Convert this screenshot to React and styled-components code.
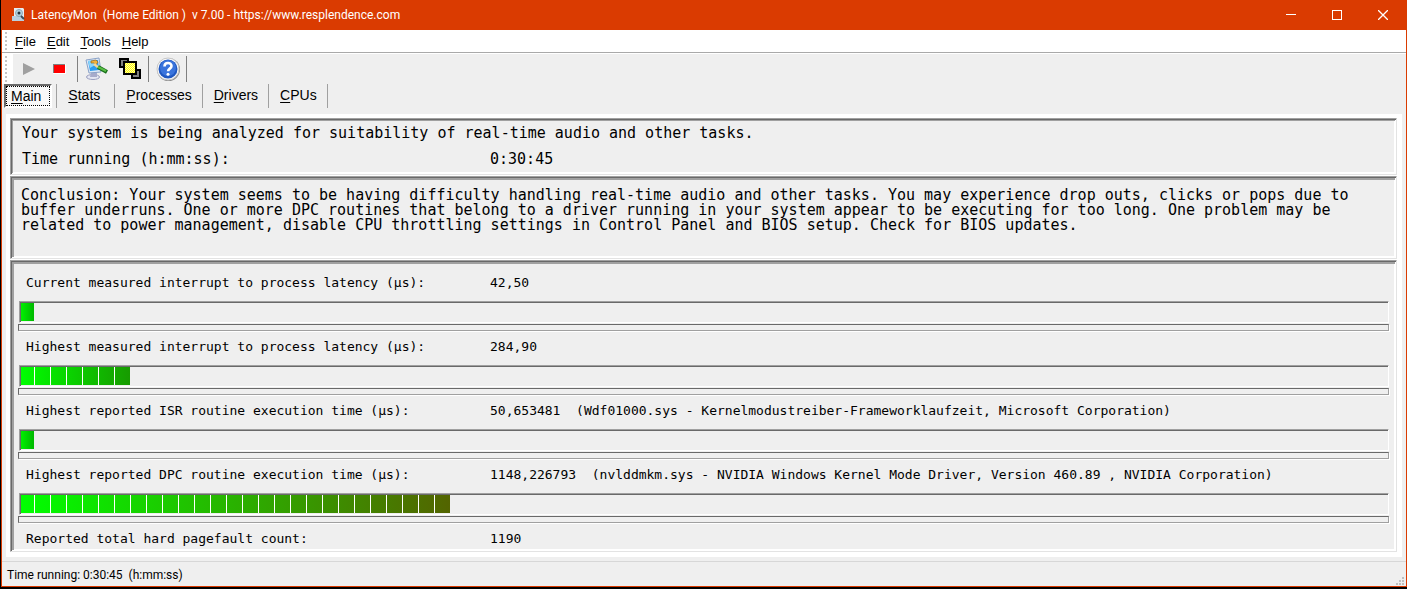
import React from "react";
import styled, { createGlobalStyle } from "styled-components";

const GlobalStyle = createGlobalStyle`
  * {
    box-sizing: border-box;
  }
  body {
    margin: 0;
    background: #000;
    color: #000;
    font-family: "Liberation Sans", Arial, sans-serif;
  }
`;

const Window = styled.div`
  display: flex;
  flex-direction: column;
  min-height: calc(100vh - 2px);
  margin-left: 1px;
  border: 1px solid #da3b01;
  border-top: 0;
  background: #efefef;
`;

const TitleBar = styled.header`
  display: flex;
  align-items: center;
  height: 30px;
  padding-left: 9px;
  background: #da3b01;
  color: #fff;
`;

const Title = styled.h1`
  flex: 1;
  margin: 0 0 0 4px;
  font: 12px/16px Roboto, "Segoe UI", sans-serif;
  white-space: pre;
`;

const CaptionButton = styled.button`
  display: flex;
  align-items: center;
  justify-content: center;
  width: 46px;
  height: 30px;
  padding: 0;
  border: 0;
  background: none;
  color: #fff;
`;

const MenuBar = styled.nav`
  display: flex;
  align-items: center;
  gap: 11px;
  height: 24px;
  padding-left: 3px;
  border-bottom: 1px solid #fff;
  background: #fff;
  box-shadow: inset 0 -1px #a9a9a9;
`;

const Grip = styled.span`
  align-self: stretch;
  width: 2px;
  margin: 2px 0;
  background: repeating-linear-gradient(#c4c4c4 0 2px, #fff 2px 4px);
`;

const MenuButton = styled.button`
  padding: 0;
  border: 0;
  background: none;
  color: #000;
  font: 13px/16px "Liberation Sans", Arial, sans-serif;

  &:first-of-type {
    margin-left: -3px;
  }
`;

const Key = styled.span`
  text-decoration: underline;
  text-underline-offset: 2px;
`;

const ToolBar = styled.div`
  display: flex;
  align-items: center;
  height: 30px;
`;

const ToolGrip = styled.div`
  display: flex;
  width: 11px;
  height: 30px;
  padding-left: 3px;
  background: #fff;
`;

const ToolButton = styled.button`
  display: flex;
  align-items: center;
  justify-content: center;
  width: ${(props) => (props.$wide ? 33 : 31)}px;
  height: 28px;
  padding: 0;
  border: 0;
  background: none;
`;

const Divider = styled.span`
  width: 1px;
  height: 26px;
  margin: 0 2px;
  background: #808080;
`;

const Tabs = styled.div`
  display: flex;
  height: 24px;
  padding-left: 2px;
`;

const Tab = styled.button`
  min-width: 58px;
  height: 24px;
  padding: 0 10px 2px 11px;
  border: 0;
  border-right: 1px solid #a0a0a0;
  background: none;
  color: #000;
  font: 14px/20px "Liberation Sans", Arial, sans-serif;
  text-align: left;
`;

const ActiveTab = styled(Tab)`
  min-width: 0;
  margin-right: 4px;
  padding: 0 9px 0 5px;
  border: 2px solid #fff;
  border-top-color: #696969;
  border-left-color: #696969;
  background: #f8f8f8;
  outline: 1px dotted #000;
  outline-offset: -3px;
`;

const TabGap = styled.span`
  width: 1px;
  background: #a0a0a0;
`;

const Page = styled.main`
  flex: 1;
  display: flex;
  flex-direction: column;
  gap: 1px;
  margin: 6px 4px 4px;
  padding: 4px 5px 5px 4px;
  background: #fff;
`;

const Panel = styled.section`
  border: 1px solid #e3e3e3;
  border-top-color: #a0a0a0;
  border-left-color: #a0a0a0;
  background: #efefef;
  box-shadow:
    inset 1px 1px #696969,
    inset -1px -1px #fff,
    inset ${(props) => (props.$deep ? "3px 3px" : "2px 2px")} #a0a0a0,
    inset -2px -2px #fff;
  font-family: "DejaVu Sans Mono", "Lucida Console", monospace;
`;

const Summary = styled(Panel)`
  height: 57px;
  padding: 1px 11px;
  font-size: 15px;
  line-height: 26px;
`;

const Pair = styled.div`
  display: grid;
  grid-template-columns: 468px 1fr;
  white-space: pre;
`;

const Conclusion = styled(Panel)`
  min-height: 83px;
  padding: 11px 10px;
  font-size: 15px;
  line-height: 15px;
`;

const Paragraph = styled.p`
  margin: 0;
`;

const Readings = styled(Panel)`
  flex: 1;
  padding: 5px 7px 0;
`;

const Reading = styled.div`
  height: 64px;

  &:last-child {
    height: 24px;
  }
`;

const ReadingText = styled.div`
  display: grid;
  grid-template-columns: 464px 1fr;
  margin-bottom: 2px;
  padding-left: 8px;
  font-size: 13px;
  line-height: 33px;
  white-space: pre;
`;

const Meter = styled.div`
  height: 22px;
  margin-left: 1px;
  border: 1px solid #fff;
  border-top-color: #a0a0a0;
  border-left-color: #a0a0a0;
  box-shadow: inset 1px 1px #696969;
  padding: 1px 0 0 1px;
`;

const Fill = styled.div`
  height: 18px;
  background:
    repeating-linear-gradient(90deg, transparent 0 13px, #fff 13px 14px, transparent 14px 16px),
    linear-gradient(90deg, ${(props) => props.$from}, ${(props) => props.$to});
`;

const Groove = styled.div`
  height: 7px;
  margin-top: 1px;
  border: 1px solid #a0a0a0;
  border-top-color: #696969;
  border-left-color: #696969;
  box-shadow: 1px 1px #fff;
`;

const StatusBar = styled.footer`
  display: flex;
  align-items: center;
  justify-content: space-between;
  height: 25px;
  padding: 1px 2px 0 5px;
  border-top: 1px solid #d7d7d7;
  font: 12px/16px Roboto, "Segoe UI", sans-serif;
  white-space: pre;
`;

const menus = ["File", "Edit", "Tools", "Help"];
const tabs = ["Stats", "Processes", "Drivers", "CPUs"];

const readings = [
  {
    label: "Current measured interrupt to process latency (µs):",
    value: "42,50",
    width: 13,
    from: "#00f000",
    to: "#00b800",
  },
  {
    label: "Highest measured interrupt to process latency (µs):",
    value: "284,90",
    width: 109,
    from: "#00ff00",
    to: "#179b00",
  },
  {
    label: "Highest reported ISR routine execution time (µs):",
    value: "50,653481  (Wdf01000.sys - Kernelmodustreiber-Frameworklaufzeit, Microsoft Corporation)",
    width: 13,
    from: "#00f000",
    to: "#00b800",
  },
  {
    label: "Highest reported DPC routine execution time (µs):",
    value: "1148,226793  (nvlddmkm.sys - NVIDIA Windows Kernel Mode Driver, Version 460.89 , NVIDIA Corporation)",
    width: 429,
    from: "#00ff00",
    to: "#536400",
  },
  { label: "Reported total hard pagefault count:", value: "1190" },
];

const AppIcon = () => (
  <svg width="16" height="16" viewBox="0 0 16 16" aria-hidden="true">
    <path d="M3 1h9l1 1v11H3z" fill="#e6edf2" />
    <path d="M1 9h9l3 3v2H1z" fill="#b9cfe0" />
    <circle cx="8" cy="6" r="3.500" fill="#b5d3df" stroke="#8fa9b8" />
    <circle cx="8" cy="6" r="1.500" fill="#22303c" />
    <path d="M10 9l3 3" stroke="#3c4c58" strokeWidth="2" />
  </svg>
);

const MonitorIcon = () => (
  <svg width="24" height="24" viewBox="0 0 24 24" aria-hidden="true">
    <ellipse cx="8" cy="20" rx="6.500" ry="2.500" fill="#e4e6f2" stroke="#9a9fc0" />
    <path d="M6 15l6 0 0 5-7 0z" fill="#a7abcb" />
    <path d="M1 3l13-2 2 14-12 1z" fill="#dfe9f6" stroke="#8aa2c8" />
    <path d="M3 4l10-1 1 10-9 1z" fill="#2a9cf0" />
    <path d="M3 4l5-1 2 5-5 3z" fill="#86d4fb" />
    <path d="M6 4l5-1 2 2-2 3-2-2-3 0z" fill="#f0b23b" stroke="#9c6717" strokeWidth="0.700" />
    <path d="M9 7l5 4" stroke="#f2d79a" strokeWidth="2.500" />
    <path d="M13 10l9 5" stroke="#176d19" strokeWidth="4" />
    <path d="M13 10l8 4" stroke="#59bd45" strokeWidth="2" />
  </svg>
);

const LayersIcon = () => (
  <svg width="22" height="22" viewBox="0 0 22 22" shapeRendering="crispEdges" aria-hidden="true">
    <defs>
      <pattern id="dots" width="2" height="2" patternUnits="userSpaceOnUse">
        <rect width="2" height="2" fill="#ff0" />
        <rect width="1" height="1" fill="#fffbb0" />
        <rect x="1" y="1" width="1" height="1" fill="#fffbb0" />
      </pattern>
    </defs>
    <path d="M1 1h8v8H1zM13 12h8v8h-8z" fill="#808080" stroke="#000" strokeWidth="2" />
    <path d="M5 4h12v12H5z" fill="url(#dots)" stroke="#000" strokeWidth="2" />
  </svg>
);

const HelpIcon = () => (
  <svg width="24" height="24" viewBox="0 0 24 24" aria-hidden="true">
    <circle cx="12.500" cy="12.500" r="11.500" fill="#8c8c8c" />
    <circle cx="12" cy="12" r="11" fill="#fafafa" stroke="#c8c8c8" />
    <circle cx="12" cy="12" r="9.500" fill="#1f57c0" />
    <circle cx="12" cy="11" r="8" fill="#3a74dc" />
    <path d="M8.500 9.500C8.500 5 15.500 5 15.500 9c0 2.600-3.400 2.600-3.400 5.200" fill="none" stroke="#fff" strokeWidth="2.600" />
    <circle cx="12" cy="17.200" r="1.500" fill="#fff" />
  </svg>
);

const Hotkey = ({ text }) => (
  <>
    <Key>{text[0]}</Key>
    {text.slice(1)}
  </>
);

const App = () => {
  return (
    <>
      <GlobalStyle />
      <Window>
        <TitleBar>
          <AppIcon />
          <Title>{"LatencyMon  (Home Edition )  v 7.00 - https://www.resplendence.com"}</Title>
          <CaptionButton aria-label="Minimize">
            <svg width="10" height="10" shapeRendering="crispEdges"><path d="M0 4h10v1H0z" fill="#fff" /></svg>
          </CaptionButton>
          <CaptionButton aria-label="Maximize">
            <svg width="10" height="10" shapeRendering="crispEdges"><path d="M0 0h10v10H0zM1 1v8h8V1z" fill="#fff" fillRule="evenodd" /></svg>
          </CaptionButton>
          <CaptionButton aria-label="Close">
            <svg width="10" height="10"><path d="M0 0l10 10M10 0L0 10" stroke="#fff" strokeWidth="1.300" /></svg>
          </CaptionButton>
        </TitleBar>
        <MenuBar>
          <Grip />
          {menus.map((menu) => (
            <MenuButton key={menu}>
              <Hotkey text={menu} />
            </MenuButton>
          ))}
        </MenuBar>
        <ToolBar>
          <ToolGrip>
            <Grip />
          </ToolGrip>
          <ToolButton aria-label="Start">
            <svg width="12" height="12"><path d="M0 0l12 6-12 6z" fill="#a0a0a0" /></svg>
          </ToolButton>
          <ToolButton aria-label="Stop">
            <svg width="13" height="10" shapeRendering="crispEdges">
              <path d="M0 0h13v10H0z" fill="#fff" />
              <path d="M0 0h12v9H0z" fill="#808080" />
              <path d="M1 1h11v8H1z" fill="#f00" />
            </svg>
          </ToolButton>
          <Divider />
          <ToolButton $wide aria-label="Options"><MonitorIcon /></ToolButton>
          <ToolButton $wide aria-label="Windows"><LayersIcon /></ToolButton>
          <Divider />
          <ToolButton $wide aria-label="Help"><HelpIcon /></ToolButton>
          <Divider />
        </ToolBar>
        <Tabs role="tablist">
          <ActiveTab role="tab" aria-selected="true">
            <Hotkey text="Main" />
          </ActiveTab>
          <TabGap />
          {tabs.map((tab) => (
            <Tab key={tab} role="tab" aria-selected="false">
              <Hotkey text={tab} />
            </Tab>
          ))}
        </Tabs>
        <Page>
          <Summary>
            <Paragraph>Your system is being analyzed for suitability of real-time audio and other tasks.</Paragraph>
            <Pair>
              <span>Time running (h:mm:ss):</span>
              <span>0:30:45</span>
            </Pair>
          </Summary>
          <Conclusion $deep>
            <Paragraph>
              Conclusion: Your system seems to be having difficulty handling real-time audio and other tasks. You may
              experience drop outs, clicks or pops due to buffer underruns. One or more DPC routines that belong to a
              driver running in your system appear to be executing for too long. One problem may be related to power
              management, disable CPU throttling settings in Control Panel and BIOS setup. Check for BIOS updates.
            </Paragraph>
          </Conclusion>
          <Readings $deep>
            {readings.map((reading) => (
              <Reading key={reading.label}>
                <ReadingText>
                  <span>{reading.label}</span>
                  <span>{reading.value}</span>
                </ReadingText>
                {reading.width && (
                  <>
                    <Meter>
                      <Fill $from={reading.from} $to={reading.to} style={{ width: reading.width }} />
                    </Meter>
                    <Groove />
                  </>
                )}
              </Reading>
            ))}
          </Readings>
        </Page>
        <StatusBar>
          <span>{"Time running: 0:30:45  (h:mm:ss)"}</span>
          <svg width="8" height="24" aria-hidden="true">
            <path d="M6 14h2v2H6zM3 17h2v2H3zM6 17h2v2H6zM0 20h2v2H0zM3 20h2v2H3zM6 20h2v2H6z" fill="#bfbfbf" />
          </svg>
        </StatusBar>
      </Window>
    </>
  );
};

export default App;
